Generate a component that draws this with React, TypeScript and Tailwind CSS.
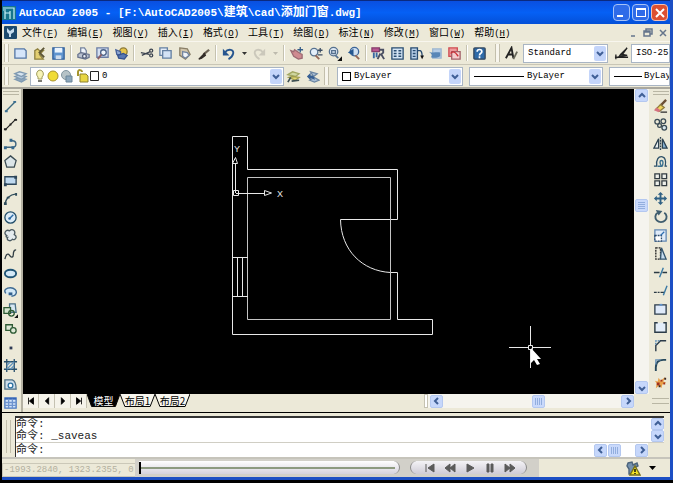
import type { ReactNode } from "react";

type IconProps = { children: ReactNode; className?: string };

const Icon = ({ children, className = "w-4 h-4" }: IconProps) => (
  <svg
    viewBox="0 0 16 16"
    className={`${className} shrink-0`}
    fill="none"
    stroke="#33475c"
    strokeWidth="1.4"
    aria-hidden="true"
  >
    {children}
  </svg>
);

type Tool = { name: string; icon: ReactNode };

const menus = [
  ["文件", "F"],
  ["编辑", "E"],
  ["视图", "V"],
  ["插入", "I"],
  ["格式", "O"],
  ["工具", "T"],
  ["绘图", "D"],
  ["标注", "N"],
  ["修改", "M"],
  ["窗口", "W"],
  ["帮助", "H"],
];

const fileTools: Tool[] = [
  {
    name: "New",
    icon: <path d="M2 3h10l2 2v8H2z" fill="#d5e5fa" stroke="#5577a5" />,
  },
  {
    name: "Open",
    icon: (
      <>
        <path d="M3 14V5l3-2 2 2h4L8 9l4 5z" fill="#e3cf72" stroke="#8f8140" />
        <path d="M13 2L8 7l5 5" stroke="#5c5535" strokeWidth="2" />
      </>
    ),
  },
  {
    name: "Save",
    icon: (
      <>
        <path d="M2 2h12v12H2z" fill="#5f94cf" stroke="#315f9b" />
        <path d="M4 2h8v5H4z" fill="#eaf3fd" stroke="none" />
        <path d="M5 10h6v4H5z" fill="#cfdcec" stroke="none" />
      </>
    ),
  },
];

const printTools: Tool[] = [
  {
    name: "Plot",
    icon: (
      <>
        <path d="M5 8V2h4l2 3v4" fill="#eef3fb" stroke="#77859f" />
        <path d="M2 9l3-2 9 2v3l-4 2-8-2z" fill="#b9c1d0" stroke="#6b7690" />
        <circle cx="9" cy="11" r="2" fill="#e9edf5" stroke="#55617c" />
      </>
    ),
  },
  {
    name: "Plot Preview",
    icon: (
      <>
        <path d="M2 2h12v10H2z" fill="#d5e0f2" stroke="#6c7ea5" />
        <circle cx="9" cy="7" r="3" fill="#f2f7fd" stroke="#4c6288" />
        <path d="M7 9l-4 5" stroke="#8b5f67" strokeWidth="2" />
      </>
    ),
  },
  {
    name: "Publish",
    icon: (
      <>
        <circle cx="10" cy="6" r="4" fill="#e6c54d" stroke="#8d7a35" />
        <path d="M2 4l5 2v4l-4-1z" fill="#90a8d2" stroke="#46619b" />
        <path d="M4 10l6-2 4 2-3 4-6-1z" fill="#5878b3" stroke="#34518c" />
      </>
    ),
  },
];

const editTools: Tool[] = [
  {
    name: "Cut",
    icon: (
      <>
        <path d="M2 7l9 2M3 10l9-4" stroke="#3c4450" />
        <circle cx="13" cy="5" r="1.6" stroke="#3c4450" />
        <circle cx="13" cy="10" r="1.6" stroke="#3c4450" />
      </>
    ),
  },
  {
    name: "Copy",
    icon: (
      <>
        <path d="M2 2h8v8H2z" fill="#e4ecf7" stroke="#6480a2" />
        <path d="M5 5h9v8H5z" fill="#d3e2f5" stroke="#6480a2" />
      </>
    ),
  },
  {
    name: "Paste",
    icon: (
      <>
        <path d="M3 2l8 1 3 6-5 5-6-4z" fill="#d3c7ad" stroke="#8a7f67" />
        <path d="M6 6l5 1 2 3-4 3-3-2z" fill="#f0f3f8" stroke="#7385a0" />
      </>
    ),
  },
  {
    name: "Match Properties",
    icon: (
      <>
        <path d="M14 4L8 9" stroke="#6d6456" strokeWidth="2.4" />
        <path d="M9 8l-6 6 3-1 4-3z" fill="#332d28" stroke="#332d28" />
      </>
    ),
  },
];

const undoTool: Tool = {
  name: "Undo",
  icon: (
    <>
      <path d="M4 7c4-5 10-3 9 1s-3 5-5 6" stroke="#26558f" strokeWidth="2" />
      <path d="M2 3v7h7z" fill="#26558f" stroke="none" />
    </>
  ),
};

const redoTool: Tool = {
  name: "Redo",
  icon: (
    <>
      <path d="M12 7C8 2 2 4 3 8s3 5 5 6" stroke="#cbc8bb" strokeWidth="2" />
      <path d="M14 3v7H7z" fill="#cbc8bb" stroke="none" />
    </>
  ),
};

const viewTools: Tool[] = [
  {
    name: "Pan",
    icon: (
      <>
        <path
          d="M2 5l3 1 1-2 6 4 2 1v4l-4 1-5-3z"
          fill="#cf8a90"
          stroke="#9c6a73"
        />
        <path d="M12 1v6M9 4h6" stroke="#355d89" />
      </>
    ),
  },
  {
    name: "Zoom Realtime",
    icon: (
      <>
        <circle cx="6.5" cy="6.5" r="4" fill="#e4effa" stroke="#56718f" />
        <path d="M8 10l4 4" stroke="#95695a" strokeWidth="2" />
        <path d="M13 2v5M10.5 4.5h5M10.5 9.5h5" stroke="#3c4d63" />
      </>
    ),
  },
  {
    name: "Zoom Window",
    icon: (
      <>
        <circle cx="7" cy="6" r="4.500" fill="#dce7f3" stroke="#56718f" />
        <path d="M5 5h4v3H5z" stroke="#56718f" />
        <path d="M9 10l3 3" stroke="#56718f" strokeWidth="2" />
        <path d="M16 11v5h-5z" fill="#111" stroke="none" />
      </>
    ),
  },
  {
    name: "Zoom Previous",
    icon: (
      <>
        <circle cx="9" cy="6" r="4.500" fill="#cfe0f2" stroke="#3c6598" />
        <path d="M10 10l4 4" stroke="#95695a" strokeWidth="2" />
        <path d="M2 7l6-4v7z" fill="#24568f" stroke="none" />
      </>
    ),
  },
];

const paletteTools: Tool[] = [
  {
    name: "Properties",
    icon: (
      <>
        <path d="M1 2h8v4H1z" fill="#b85792" stroke="#863c6b" />
        <path d="M3 7v6M6 7v5" stroke="#3868a2" strokeWidth="2" />
        <path d="M9 4h4v3l-2 2 3 5M10 8l-3 6" stroke="#4b5063" strokeWidth="2" />
      </>
    ),
  },
  {
    name: "DesignCenter",
    icon: (
      <>
        <path d="M2 2h12v12H2z" fill="#d4e5f5" stroke="#284c71" />
        <path
          d="M4 5h3M9 5h3M4 8h3M9 8h3M4 11h3M9 11h3"
          stroke="#284c71"
          strokeWidth="1.5"
        />
      </>
    ),
  },
  {
    name: "Tool Palettes",
    icon: (
      <>
        <path d="M2 2h7v12H2z" fill="#b9d1e9" stroke="#284c71" />
        <path d="M4 5h3M4 8h3M4 11h3" stroke="#284c71" />
        <path d="M9 5h3c2 1 2 3 2 6" stroke="#284c71" />
        <path d="M12 10h4l-2 4z" fill="#111" stroke="none" />
      </>
    ),
  },
  {
    name: "Sheet Set Manager",
    icon: (
      <>
        <path d="M5 3h9v10H5z" fill="#b5cde6" stroke="#9db6d0" />
        <path d="M1 6c4 2 8 0 12 1v4c-4 2-6 2-10 1 2-2 1-4-2-6z" fill="#5987b7" stroke="none" />
      </>
    ),
  },
  {
    name: "Markup Set Manager",
    icon: (
      <>
        <path d="M2 2h9v9H2z" fill="#ee9a9c" stroke="#cf4d52" />
        <path d="M5 6h9v8H5z" fill="#f5cdcd" stroke="#a3616a" />
        <path d="M4 8c3-5 7 2 8 3" stroke="#cb2e35" />
      </>
    ),
  },
];

const helpTool: Tool = {
  name: "Help",
  icon: (
    <>
      <rect x="2" y="2" width="12" height="12" rx="1" fill="#2e6aa8" />
      <path
        d="M5.5 6c0-3 5-3 5 0 0 2-2.500 1.500-2.500 4M8 11v2"
        stroke="#fff"
        strokeWidth="1.8"
      />
    </>
  ),
};

const drawTools: Tool[] = [
  {
    name: "Line",
    icon: (
      <>
        <path d="M3 13L13 3" stroke="#3c6a80" />
        <path d="M2 12h3v2H2zM11 2h3v2h-3z" fill="#3a6f93" stroke="none" />
      </>
    ),
  },
  {
    name: "Construction Line",
    icon: (
      <>
        <path d="M2 14L14 2" stroke="#222" />
        <path d="M1 12h3v2H1zM12 2h3v2h-3zM7 7h2v2H7z" fill="#222" stroke="none" />
      </>
    ),
  },
  {
    name: "Polyline",
    icon: (
      <>
        <path d="M3 12h7c5 0 5-7 0-7H8" stroke="#3f6680" strokeWidth="1.5" />
        <path d="M1 11h3v3H1zM9 11h3v3H9zM7 3h3v3H7z" fill="#35688d" stroke="none" />
      </>
    ),
  },
  {
    name: "Polygon",
    icon: <path d="M8 2l6 5-2 7H4L2 7z" fill="#dbe5e8" stroke="#3b4c53" />,
  },
  {
    name: "Rectangle",
    icon: (
      <>
        <path d="M2 4h12v8H2z" fill="#bfd9ef" stroke="#2d4659" />
        <path d="M1 11h3v3H1zM12 3h3v3h-3z" fill="#2d4659" stroke="none" />
      </>
    ),
  },
  {
    name: "Arc",
    icon: (
      <>
        <path d="M2 14c1-6 5-10 12-11" stroke="#2f4c5b" />
        <path
          d="M1 12h3v3H1zM4 6h3v2H4zM13 2h2v3h-2z"
          fill="#2f4c5b"
          stroke="none"
        />
      </>
    ),
  },
  {
    name: "Circle",
    icon: (
      <>
        <circle cx="8" cy="8" r="6" fill="#dcecf8" stroke="#234e69" />
        <path d="M7 9l4-4" stroke="#2e6ca6" strokeWidth="1.5" />
        <circle cx="7" cy="9" r="1.4" fill="#2e6ca6" stroke="none" />
      </>
    ),
  },
  {
    name: "Revision Cloud",
    icon: (
      <path
        d="M4 8C0 6 3 1 7 3c3-3 7 0 5 4 4 2 1 7-2 5-2 3-7 1-5-2-2 0-2-1-1-2z"
        fill="#e4ebee"
        stroke="#4a5960"
      />
    ),
  },
  {
    name: "Spline",
    icon: <path d="M2 13c1-5 3-7 5-4s4 2 4-1 1-5 3-5" stroke="#333f45" />,
  },
  {
    name: "Ellipse",
    icon: (
      <ellipse
        cx="8"
        cy="8"
        rx="6"
        ry="4"
        fill="#d3e9f7"
        stroke="#1f5476"
        strokeWidth="2"
      />
    ),
  },
  {
    name: "Ellipse Arc",
    icon: (
      <>
        <path
          d="M3 10C0 6 4 4 8 4s7 3 6 6-5 3-5 3"
          fill="#d3e9f7"
          stroke="#3d6992"
          strokeWidth="1.5"
        />
        <path d="M6 9h4v3H6z" fill="#32608e" stroke="none" />
      </>
    ),
  },
  {
    name: "Insert Block",
    icon: (
      <>
        <path d="M7 1h6l1 9H7z" fill="#d6e7f2" stroke="#4a6f86" />
        <path d="M1 5h7v6H1z" fill="#d5e5cf" stroke="#2e5b35" />
        <circle cx="9" cy="11" r="3" stroke="#2e5b35" />
        <path d="M16 12v4h-4z" fill="#111" stroke="none" />
      </>
    ),
  },
  {
    name: "Make Block",
    icon: (
      <>
        <path d="M3 4h7v6H3z" fill="#dfe9d8" stroke="#2e5b35" />
        <circle cx="11" cy="10" r="3" fill="#dfe9d8" stroke="#2e5b35" />
      </>
    ),
  },
  {
    name: "Point",
    icon: <path d="M7 7h3v3H7z" fill="#2e3a55" stroke="none" />,
  },
  {
    name: "Hatch",
    icon: (
      <>
        <path d="M4 1v14M12 1v14M1 4h14M1 12h14" stroke="#28506c" />
        <path d="M4 8l4-4M4 12l8-8M8 12l4-4" stroke="#5f93bd" />
      </>
    ),
  },
  {
    name: "Region",
    icon: (
      <>
        <path d="M2 3h8c3 1 4 5 4 10H2z" fill="#cfdeea" stroke="#4f6f84" />
        <circle cx="8" cy="9" r="2.5" fill="#fff" stroke="#2a6fa0" />
      </>
    ),
  },
  {
    name: "Table",
    icon: (
      <>
        <path d="M2 3h12v11H2z" fill="#d6e6fa" stroke="#4a78c0" />
        <path d="M2 4h12" stroke="#3463b5" strokeWidth="2" />
        <path d="M6 4v10M10 4v10M2 8h12M2 11h12" stroke="#6e94cf" />
      </>
    ),
  },
];

const modifyTools: Tool[] = [
  {
    name: "Erase",
    icon: (
      <>
        <path d="M14 1L8 7" stroke="#6b4f34" strokeWidth="2.5" />
        <path d="M8 6l4 3-5 4-4-2z" fill="#f0d45c" stroke="#8f7c3b" />
        <path d="M1 12l3-3 4 3-2 2z" fill="#d4727f" stroke="none" />
        <path d="M8 14h7" stroke="#333" />
      </>
    ),
  },
  {
    name: "Copy Object",
    icon: (
      <>
        <circle cx="4.5" cy="5" r="2.500" stroke="#394a55" />
        <circle cx="11" cy="4.500" r="2.500" stroke="#394a55" />
        <circle cx="7" cy="9" r="2" stroke="#394a55" />
        <circle cx="12" cy="11.500" r="2.500" fill="#d7e6ee" stroke="#394a55" />
      </>
    ),
  },
  {
    name: "Mirror",
    icon: (
      <>
        <path d="M6 3v10H1z" fill="#eef3f4" stroke="#2c4150" />
        <path d="M10 3v10h5z" fill="#86b0d1" stroke="#2c4150" />
        <path d="M8 1v14" stroke="#2c4150" strokeDasharray="2 1" />
      </>
    ),
  },
  {
    name: "Offset",
    icon: (
      <>
        <path d="M1 13h3C3 6 6 2 10 3s4 5 3 10h2" stroke="#2d5068" />
        <path d="M5 13h4c-2-3-2-6 0-6s2 2 1 6" stroke="#3b7190" strokeWidth="1.5" />
      </>
    ),
  },
  {
    name: "Array",
    icon: (
      <path
        d="M2 2h5v5H2zM9.500 2h5v5h-5zM2 9.500h5v5H2zM9.500 9.500h5v5h-5z"
        fill="#eef0ea"
        stroke="#333c42"
      />
    ),
  },
  {
    name: "Move",
    icon: (
      <>
        <path d="M8 3v10M3 8h10" stroke="#2f6084" strokeWidth="2" />
        <path
          d="M8 1l3 3H5zM8 15l3-3H5zM1 8l3-3v6zM15 8l-3-3v6z"
          fill="#2f6084"
          stroke="none"
        />
      </>
    ),
  },
  {
    name: "Rotate",
    icon: (
      <>
        <path d="M5 4a6 5.500 0 1 0 7 0" stroke="#3f5d6e" strokeWidth="2" />
        <path d="M3 1l7 1-4 5z" fill="#3f5d6e" stroke="none" />
      </>
    ),
  },
  {
    name: "Scale",
    icon: (
      <>
        <path d="M2 2h12v12H2z" fill="#e0ebf8" stroke="#6489b3" />
        <path d="M2 8h7v6H2z" fill="#fff" stroke="#2c4a6b" strokeDasharray="2 1" />
        <path d="M8 8l4-4" stroke="#2f70b2" />
      </>
    ),
  },
  {
    name: "Stretch",
    icon: (
      <>
        <path d="M3 2h5v12H3z" stroke="#222" strokeDasharray="2 1" />
        <path d="M9 2l5 12H8z" fill="#c4dbef" stroke="#34566f" />
      </>
    ),
  },
  {
    name: "Trim",
    icon: (
      <>
        <path d="M1 8h6M10 8h5" stroke="#2a3a44" />
        <path d="M11 3l-4 10" stroke="#3a79a4" strokeWidth="1.5" />
      </>
    ),
  },
  {
    name: "Extend",
    icon: (
      <>
        <path d="M1 10h3M5 10h2M8 10h4" stroke="#2a3a44" />
        <path d="M15 3l-4 10" stroke="#3a79a4" strokeWidth="1.5" />
      </>
    ),
  },
  {
    name: "Break at Point",
    icon: (
      <>
        <path d="M2 3h12v10H2z" fill="#dfeafa" stroke="#2b3b49" />
        <path d="M7 2h3v2H7z" fill="#5f8fc8" stroke="none" />
      </>
    ),
  },
  {
    name: "Break",
    icon: (
      <>
        <path d="M3 3h10v10H3z" fill="#e3edf9" stroke="none" />
        <path d="M5 3H2v10h12V3h-3" stroke="#2b3b49" strokeWidth="1.5" />
      </>
    ),
  },
  {
    name: "Chamfer",
    icon: (
      <>
        <path d="M3 14V8l5-5h6" stroke="#2b3b49" strokeWidth="1.5" />
        <path d="M3 7V3h4" stroke="#4c83b3" strokeDasharray="2 1" />
      </>
    ),
  },
  {
    name: "Fillet",
    icon: (
      <>
        <path d="M3 15v-4c0-5 3-8 8-8h3" stroke="#26485c" strokeWidth="2" />
        <path d="M3 8V3h5" stroke="#6a93b8" />
      </>
    ),
  },
  {
    name: "Explode",
    icon: (
      <>
        <path
          d="M2 6l3 1 1-4 2 3 5-4-2 5 3 1-4 2-1 4-2-3-4 3 1-5z"
          fill="#e8a04a"
          stroke="none"
        />
        <path d="M4 8h3v3H4zM8 5h2v2H8zM11 8h2v2h-2z" fill="#a02f1c" stroke="none" />
        <path d="M6 11h2v2H6zM12 3h2v2h-2z" fill="#3b2620" stroke="none" />
      </>
    ),
  },
];

const ToolButton = ({ tool }: { tool: Tool }) => (
  <button
    type="button"
    aria-label={tool.name}
    className="flex w-[19px] h-5 shrink-0 items-center justify-center"
  >
    <Icon className="w-[15px] h-[15px]">{tool.icon}</Icon>
  </button>
);

const ToolGroup = ({ tools }: { tools: Tool[] }) => (
  <div className="flex shrink-0">
    {tools.map((tool) => (
      <ToolButton key={tool.name} tool={tool} />
    ))}
  </div>
);

const Divider = () => (
  <div className="mx-0.5 h-4 w-0.5 shrink-0 border-l border-r border-l-[#c5c2b0] border-r-white" />
);

const Grip = () => (
  <div className="mx-0.5 h-[18px] w-[5px] shrink-0 border-x border-[#c3bfac] bg-[#f8f6ee]" />
);

const DropArrow = ({ label, color }: { label: string; color: string }) => (
  <button
    type="button"
    aria-label={label}
    className="flex h-5 w-3 shrink-0 items-center justify-center"
  >
    <svg viewBox="0 0 5 3" className="w-[5px] h-[3px]" fill={color}>
      <path d="M0 0h5L2.500 3z" />
    </svg>
  </button>
);

type Direction = "up" | "down" | "left" | "right";

const chevrons: Record<Direction, string> = {
  up: "M2 6l3-3 3 3",
  down: "M2 4l3 3 3-3",
  left: "M6 2L3 5l3 3",
  right: "M4 2l3 3-3 3",
};

const Chevron = ({ direction }: { direction: Direction }) => (
  <svg
    viewBox="0 0 10 10"
    className="w-2.5 h-2.5"
    fill="none"
    stroke="#3f5f96"
    strokeWidth="2"
    aria-hidden="true"
  >
    <path d={chevrons[direction]} />
  </svg>
);

const ScrollButton = ({
  direction,
  className = "w-[13px] h-[13px]",
}: {
  direction: Direction;
  className?: string;
}) => (
  <button
    type="button"
    aria-label={`Scroll ${direction}`}
    className={`${className} flex shrink-0 items-center justify-center rounded-xs border border-[#b4c8f0] bg-[#c6d7fb]`}
  >
    <Chevron direction={direction} />
  </button>
);

const Thumb = ({ vertical = false }: { vertical?: boolean }) => (
  <div
    className={`flex w-[13px] h-[13px] shrink-0 items-center justify-center gap-px rounded-xs border border-[#b4c8f0] bg-[#c9d9fb] ${
      vertical ? "flex-col" : ""
    }`}
  >
    {[0, 1, 2, 3].map((line) => (
      <span
        key={line}
        className={vertical ? "h-px w-[7px] bg-[#92aede]" : "h-[7px] w-px bg-[#92aede]"}
      />
    ))}
  </div>
);

type ComboProps = {
  label: string;
  value: string;
  className: string;
  selectClassName?: string;
  arrow?: boolean;
  children?: ReactNode;
};

const Combo = ({
  label,
  value,
  className,
  selectClassName = "pl-1",
  arrow = true,
  children,
}: ComboProps) => (
  <div
    className={`${className} relative h-[19px] overflow-hidden border border-[#a9b5c4] bg-white`}
  >
    <select
      aria-label={label}
      defaultValue={value}
      className={`${selectClassName} block h-full w-full appearance-none bg-transparent font-['Liberation_Mono',monospace] text-[9px] leading-4 text-black`}
    >
      <option>{value}</option>
    </select>
    {children}
    {arrow && (
      <span className="pointer-events-none absolute inset-y-px right-px flex w-3 items-center justify-center rounded-xs bg-[#c4d5fa]">
        <Chevron direction="down" />
      </span>
    )}
  </div>
);

const TitleBar = () => (
  <header className="flex h-6 shrink-0 items-center border-t border-[#0a2a80] bg-linear-to-b from-[#0a4fe0] via-[#0560f5] to-[#0450d8] pr-0.5 text-white">
    <svg viewBox="0 0 14 14" className="h-3.5 w-3.5 shrink-0" aria-hidden="true">
      <path d="M0 0h14v14H0z" fill="#17758c" />
      <path
        d="M1 2h11v11M3 5v8M3 7h5v6M8 5v2M1 4h3"
        fill="none"
        stroke="#c8f2f5"
        strokeWidth="1.2"
      />
    </svg>
    <h1 className="ml-[3px] flex-1 truncate whitespace-nowrap font-['Liberation_Mono','Noto_Sans_CJK_SC',monospace] text-[11px] font-bold">
      AutoCAD 2005 - [F:\AutoCAD2005\
      <span className="text-[12px]">建筑</span>\cad\
      <span className="text-[12px]">添加门窗</span>.dwg]
    </h1>
    <div className="flex gap-0.5">
      <button
        type="button"
        aria-label="Minimize"
        className="flex h-[17px] w-[17px] items-end rounded-sm border border-[#a7c2f7] bg-[#2f6be8] p-[3px]"
      >
        <span className="h-0.5 w-1.5 bg-white" />
      </button>
      <button
        type="button"
        aria-label="Maximize"
        className="flex h-[17px] w-[17px] items-center justify-center rounded-sm border border-[#a7c2f7] bg-[#2f6be8]"
      >
        <span className="h-[9px] w-2.5 border border-t-2 border-white" />
      </button>
      <button
        type="button"
        aria-label="Close"
        className="flex h-[17px] w-[17px] items-center justify-center rounded-sm border border-[#f3c0b3] bg-[#dc5032]"
      >
        <svg viewBox="0 0 10 10" className="h-2.5 w-2.5" stroke="#fff" strokeWidth="2">
          <path d="M1 1l8 8M9 1L1 9" />
        </svg>
      </button>
    </div>
  </header>
);

const MenuBar = () => (
  <nav className="flex h-[17px] shrink-0 items-center pl-0.5 text-black">
    <svg viewBox="0 0 13 13" className="mr-1 h-[13px] w-[13px] shrink-0" aria-hidden="true">
      <rect width="13" height="13" rx="1" fill="#1c4a6e" />
      <path d="M3 2l3 3 4-3v4L7 8v3H5V8L3 6z" fill="#c3dcee" />
    </svg>
    <div className="flex flex-1">
      {menus.map(([text, key]) => (
        <button
          key={key}
          type="button"
          className="mr-2 shrink-0 whitespace-nowrap pl-px font-['Noto_Sans_CJK_SC',sans-serif] text-[10px] leading-4"
        >
          {text}
          <span className="font-['Liberation_Mono',monospace] text-[9px]">
            (<span className="underline">{key}</span>)
          </span>
        </button>
      ))}
    </div>
    <div className="flex text-[#65758c]">
      {[
        ["Minimize drawing", "M4 9h4"],
        ["Restore drawing", "M4 4V2h6v5H8M2 4h6v5H2zM2 5h6"],
        ["Close drawing", "M3 3l6 6M9 3L3 9"],
      ].map(([name, d]) => (
        <button
          key={name}
          type="button"
          aria-label={name}
          className="flex h-4 w-[15px] items-center justify-center"
        >
          <svg
            viewBox="0 0 12 12"
            className="h-3 w-3"
            fill="none"
            stroke="currentColor"
            strokeWidth="1.5"
          >
            <path d={d} />
          </svg>
        </button>
      ))}
    </div>
  </nav>
);

const StandardToolbar = () => (
  <div className="flex h-[23px] shrink-0 items-center overflow-hidden border-t border-[#f8f6ee]">
    <Grip />
    <ToolGroup tools={fileTools} />
    <Divider />
    <ToolGroup tools={printTools} />
    <Divider />
    <ToolGroup tools={editTools} />
    <Divider />
    <ToolButton tool={undoTool} />
    <DropArrow label="Undo list" color="#333" />
    <ToolButton tool={redoTool} />
    <DropArrow label="Redo list" color="#bdbaad" />
    <Divider />
    <ToolGroup tools={viewTools} />
    <Divider />
    <ToolGroup tools={paletteTools} />
    <Divider />
    <ToolButton tool={helpTool} />
    <div className="w-1 shrink-0" />
    <Grip />
    <ToolButton
      tool={{
        name: "Text Style",
        icon: (
          <>
            <path d="M2 13L8 2l2 11M4 9h6" stroke="#222" strokeWidth="2" />
            <path d="M14 6l-4 8" stroke="#6b6a5c" strokeWidth="2" />
          </>
        ),
      }}
    />
    <Combo label="Text style" value="Standard" className="ml-0.5 w-[85px] shrink-0" />
    <div className="ml-1 shrink-0">
      <ToolButton
        tool={{
          name: "Dimension Style",
          icon: (
            <>
              <path d="M1 12h14M2 9v5" stroke="#222" />
              <path d="M14 2L7 9l-2 3 9-2-5-1z" fill="#3b3f38" stroke="#222" />
            </>
          ),
        }}
      />
    </div>
    <Combo
      label="Dimension style"
      value="ISO-25"
      className="min-w-0 flex-1"
      selectClassName="pl-1"
      arrow={false}
    />
  </div>
);

const LayerToolbar = () => (
  <div className="flex h-[23px] shrink-0 items-center overflow-hidden border-t border-[#c9c6b6]">
    <Grip />
    <ToolButton
      tool={{
        name: "Layer Properties",
        icon: (
          <>
            <path d="M2 11l5-2 7 2-5 3z" fill="#8ea7bd" stroke="#7f9ab2" />
            <path d="M2 8l5-2 7 2-5 3z" fill="#b3c8dc" stroke="#7f9ab2" />
            <path d="M2 5l5-2 7 2-5 3z" fill="#d6e4f0" stroke="#7f9ab2" />
          </>
        ),
      }}
    />
    <Combo
      label="Layer"
      value="0"
      className="w-[254px] shrink-0"
      selectClassName="pl-[71px]"
    >
      <svg
        viewBox="0 0 66 16"
        className="pointer-events-none absolute left-0.5 top-0 h-4 w-[66px]"
        aria-hidden="true"
      >
        <path d="M7 2a4 4 0 0 1 2 7v2H5V9a4 4 0 0 1 2-7z" fill="#f7f3b5" stroke="#a09c5d" />
        <path d="M5 12h4v2H5z" fill="#7b7b74" />
        <circle cx="20" cy="8" r="5" fill="#f0dc35" stroke="#a9932b" />
        <circle cx="33" cy="7" r="4.500" fill="#b6c3c7" stroke="#8196a0" />
        <path d="M33 8h6v6h-6z" fill="#8ba6bb" stroke="#6b8599" />
        <path d="M45 8V4c0-3 4-2 4 0" fill="none" stroke="#a6952e" strokeWidth="2" />
        <path d="M47 6h6l2 2v6h-8z" fill="#e8d643" stroke="#8d8130" />
        <path d="M57.500 3.500h8v9h-8z" fill="#fff" stroke="#222" />
      </svg>
    </Combo>
    <ToolButton
      tool={{
        name: "Make Object's Layer Current",
        icon: (
          <>
            <path d="M2 6l5-3 7 2-4 3z" fill="#cfd6a0" stroke="#a3a763" />
            <path d="M3 9l4-1 7 1-4 3z" fill="#e3d873" stroke="#a09d4f" />
            <path d="M2 14l3-5M6 13l8-1" stroke="#3d4f52" strokeWidth="1.8" />
          </>
        ),
      }}
    />
    <ToolButton
      tool={{
        name: "Layer Previous",
        icon: (
          <>
            <path d="M6 3l7 2-4 3zM5 12l5-3 5 3-5 2z" fill="#aac0d8" stroke="#6c86a2" />
            <path d="M2 8l4-4v3c3 0 5 2 4 5-1-2-2-2-4-2v2z" fill="#365f94" stroke="none" />
          </>
        ),
      }}
    />
    <Grip />
    <Combo
      label="Color"
      value="ByLayer"
      className="ml-1.5 w-[126px] shrink-0"
      selectClassName="pl-4"
    >
      <span className="pointer-events-none absolute left-1 top-1 h-[9px] w-[9px] border border-black" />
    </Combo>
    <div className="w-1.5 shrink-0" />
    <Combo
      label="Linetype"
      value="ByLayer"
      className="w-[134px] shrink-0"
      selectClassName="pl-[57px]"
    >
      <span className="pointer-events-none absolute left-1 top-2 h-px w-[50px] bg-black" />
    </Combo>
    <div className="w-1.5 shrink-0" />
    <Combo
      label="Lineweight"
      value="ByLayer"
      className="min-w-0 flex-1"
      selectClassName="pl-[34px]"
      arrow={false}
    >
      <span className="pointer-events-none absolute left-1 top-2 h-px w-7 bg-black" />
    </Combo>
  </div>
);

const SideToolbar = ({ tools, label }: { tools: Tool[]; label: string }) => (
  <div role="toolbar" aria-label={label} className="flex min-h-0 flex-1 flex-col items-center">
    <div className="my-0.5 h-1 w-4 shrink-0 border-y border-[#b9b6a4]" />
    {tools.map((tool) => (
      <button
        key={tool.name}
        type="button"
        aria-label={tool.name}
        className="flex min-h-0 flex-1 items-center justify-center"
      >
        <Icon className="w-[15px] h-[15px]">{tool.icon}</Icon>
      </button>
    ))}
  </div>
);

// Floor plan with the UCS icon and the crosshair
const Drawing = () => (
  <svg
    viewBox="23 89 611 305"
    preserveAspectRatio="xMinYMin slice"
    className="h-full w-full"
    fill="none"
    stroke="#e8e8e8"
    strokeWidth="1"
  >
    <path d="M247.500 169.500V136.500H232.500V334.500H432.500V319.500H397.500V272.500H390.500" />
    <path d="M247.500 169.500H397.500V219.500H340.500C341 250 362 271 390.500 272.500" />
    <path d="M247.500 319.500V177.500H390.500V319.500H247.500" stroke="#c4c4c4" />
    <path d="M232.500 257.500H248M232.500 296.500H248M237.500 257.500V296.500M242.500 257.500V296.500" />
    <path d="M233.500 190.500h5v5h-5zM235.500 193V163M236 193.500H265M232.500 163.500l3-6 2 6zM264.500 190.500v5l7-2.500z" />
    <g
      fill="#e8e8e8"
      stroke="none"
      fontFamily="Liberation Sans, sans-serif"
      fontSize="9"
    >
      <text x="234" y="152">Y</text>
      <text x="277" y="197">X</text>
    </g>
    <path d="M509 347.500H528M533 347.500H551M530.500 326V345M530.500 350V368M528.500 345.500h4v4h-4z" />
    <path d="M531 348v15l3-3 3 5 3-1-3-5h4z" fill="#fff" stroke="none" />
  </svg>
);

const LayoutTabs = () => (
  <div className="flex h-[14px] shrink-0 items-stretch bg-[#ece9d8]">
    <div className="flex">
      {[
        ["First layout", "M3 2v8M9 2v8L4 6z"],
        ["Previous layout", "M8 2v8L4 6z"],
        ["Next layout", "M4 2v8l4-4z"],
        ["Last layout", "M9 2v8M3 2v8l5-4z"],
      ].map(([name, d]) => (
        <button
          key={name}
          type="button"
          aria-label={name}
          className="flex w-4 items-center justify-center border-r border-[#c5c2b2] bg-[#f5f3ea]"
        >
          <svg viewBox="0 0 12 12" className="h-2.5 w-2.5" fill="#000" stroke="#000">
            <path d={d} />
          </svg>
        </button>
      ))}
    </div>
    <div
      role="tablist"
      className="flex font-['Noto_Sans_CJK_SC',sans-serif] text-[10px] leading-3"
    >
      {["模型", "布局1", "布局2"].map((tab, index) => (
        <button
          key={tab}
          type="button"
          role="tab"
          aria-selected={index === 0}
          className={`relative whitespace-nowrap ${
            index === 0 ? "w-[33px] text-white" : "w-[35px] text-black"
          }`}
        >
          <svg
            viewBox="0 0 36 13"
            preserveAspectRatio="none"
            className="absolute inset-0 h-[13px] w-full"
            fill={index === 0 ? "#000" : "#f8f6ee"}
            stroke="#000"
          >
            <path d="M0 0l5 12.500h26L36 0" />
          </svg>
          <span className="relative">{tab}</span>
        </button>
      ))}
    </div>
    <div className="flex-1" />
    <div className="flex w-[210px] items-center bg-[#f5f4ee]">
      <div className="mr-0.5 h-full w-1 border border-[#c5c2b2] bg-white" />
      <ScrollButton direction="left" />
      <div className="flex flex-1 justify-center pl-3">
        <Thumb />
      </div>
      <ScrollButton direction="right" />
    </div>
    <div className="w-[15px]" />
  </div>
);

const Workspace = () => (
  <main className="flex min-h-0 flex-1 border-t-2 border-[#aaa89e]">
    <div className="flex w-[21px] shrink-0 flex-col border-r-2 border-[#b5b2a3] pr-0.5">
      <SideToolbar tools={drawTools} label="Draw" />
    </div>
    <div className="flex min-w-0 flex-1 flex-col pb-1">
      <div className="flex min-h-0 flex-1">
        <div className="min-w-0 flex-1 bg-black">
          <Drawing />
        </div>
        <div className="flex w-[15px] shrink-0 flex-col items-center bg-[#f5f4ee]">
          <ScrollButton direction="up" />
          <div className="flex flex-1 flex-col justify-center pb-18">
            <Thumb vertical />
          </div>
          <ScrollButton direction="down" />
        </div>
      </div>
      <LayoutTabs />
    </div>
    <div className="flex w-[21px] shrink-0 flex-col pl-0.5">
      <SideToolbar tools={modifyTools} label="Modify" />
      <div className="mx-px mb-2 mt-1.5 h-1.5 border-y border-[#b9b6a4]" />
    </div>
  </main>
);

const CommandWindow = () => (
  <section className="flex shrink-0 border-t border-black pr-1.5 pt-[3px] font-['Liberation_Mono','Noto_Sans_CJK_SC',monospace] text-[11px] leading-3 text-[#222]">
    <div className="mx-1 my-1 w-[5px] border-x border-[#c3bfac]" />
    <div className="min-w-0 flex-1 border-l border-t-2 border-[#333] bg-white">
      <div className="flex h-[25px] border-b border-[#d0cec4]">
        <div className="flex-1">
          <p>命令:</p>
          <p>命令: _saveas</p>
        </div>
        <div className="flex flex-col">
          <ScrollButton direction="up" className="h-3 w-[13px]" />
          <ScrollButton direction="down" className="h-3 w-[13px]" />
        </div>
      </div>
      <div className="flex h-[14px] items-center">
        <label htmlFor="command">命令:</label>
        <input id="command" className="min-w-0 flex-1 bg-transparent pl-2 outline-none" />
        <div className="flex w-[54px] shrink-0 gap-px">
          <ScrollButton direction="left" />
          <Thumb />
          <div className="flex-1" />
          <ScrollButton direction="right" />
        </div>
        <div className="h-full w-4 shrink-0 bg-[#ece9d8]" />
      </div>
    </div>
  </section>
);

const playback = [
  ["Previous", "M2 2v8M10 2v8L4 6z"],
  ["Rewind", "M6 2v8L1 6zM11 2v8L6 6z"],
  ["Play", "M3 2v8l7-4z"],
  ["Pause", "M3 2h2v8H3zM7 2h2v8H7z"],
  ["Forward", "M1 2v8l5-4zM6 2v8l5-4z"],
];

const StatusBar = () => (
  <footer className="flex h-5 shrink-0 items-stretch border-t-2 border-[#c6c4bb]">
    <div className="mt-1 flex w-[133px] shrink-0 items-center whitespace-nowrap border border-r-0 border-[#cbc8b8] pl-px font-['Liberation_Mono',monospace] text-[9px] leading-3 text-[#b3b09f]">
      -1993.2840, 1323.2355, 0
    </div>
    <div className="flex min-w-0 flex-1 items-start bg-[#d2d0c9] pt-0.5">
      <div className="relative ml-1 flex h-[13px] min-w-0 flex-1 items-center rounded-r-lg border-r border-[#888] bg-linear-to-b from-white to-[#d5d2dd]">
        <input
          type="range"
          aria-label="Position"
          min={0}
          max={100}
          defaultValue={0}
          className="mr-1 h-[13px] w-full appearance-none bg-transparent [&::-webkit-slider-runnable-track]:h-0.5 [&::-webkit-slider-runnable-track]:bg-[#8d9a80] [&::-webkit-slider-thumb]:-mt-[5px] [&::-webkit-slider-thumb]:h-3 [&::-webkit-slider-thumb]:w-0.5 [&::-webkit-slider-thumb]:appearance-none [&::-webkit-slider-thumb]:bg-black"
        />
      </div>
      <div className="ml-2.5 mr-3 flex h-[13px] w-[117px] shrink-0 items-center justify-center gap-2 rounded-lg border-x border-[#888] bg-linear-to-b from-[#f4f3f6] to-[#cfccd6] pl-0.5">
        {playback.map(([name, d]) => (
          <button key={name} type="button" aria-label={name}>
            <svg viewBox="0 0 12 12" className="block h-3 w-3" fill="#5a5a5a" stroke="#5a5a5a">
              <path d={d} />
            </svg>
          </button>
        ))}
      </div>
    </div>
    <div className="flex w-[131px] shrink-0 items-center justify-end gap-2 pr-[14px]">
      <Icon>
        <path d="M3 3l4-1 1 3 4-2 1 3-4 2v6H4V9L2 6z" fill="#7591ad" stroke="#4c647c" />
        <path d="M10 6l5 9H5z" fill="#f5e424" stroke="#77701c" />
        <path d="M10 9v3M10 13v1" stroke="#111" strokeWidth="1.5" />
      </Icon>
      <button type="button" aria-label="Status bar menu">
        <svg viewBox="0 0 7 4" className="block h-1 w-[7px]">
          <path d="M0 0h7L3.500 4z" />
        </svg>
      </button>
    </div>
  </footer>
);

export default function App() {
  return (
    <div className="h-screen overflow-hidden bg-black pb-[3px] pl-0.5">
      <div className="flex h-full flex-col border-b-[3px] border-r-[3px] border-[#1c4fc4] bg-[#ece9d8]">
        <TitleBar />
        <MenuBar />
        <StandardToolbar />
        <LayerToolbar />
        <Workspace />
        <CommandWindow />
        <StatusBar />
      </div>
    </div>
  );
}
